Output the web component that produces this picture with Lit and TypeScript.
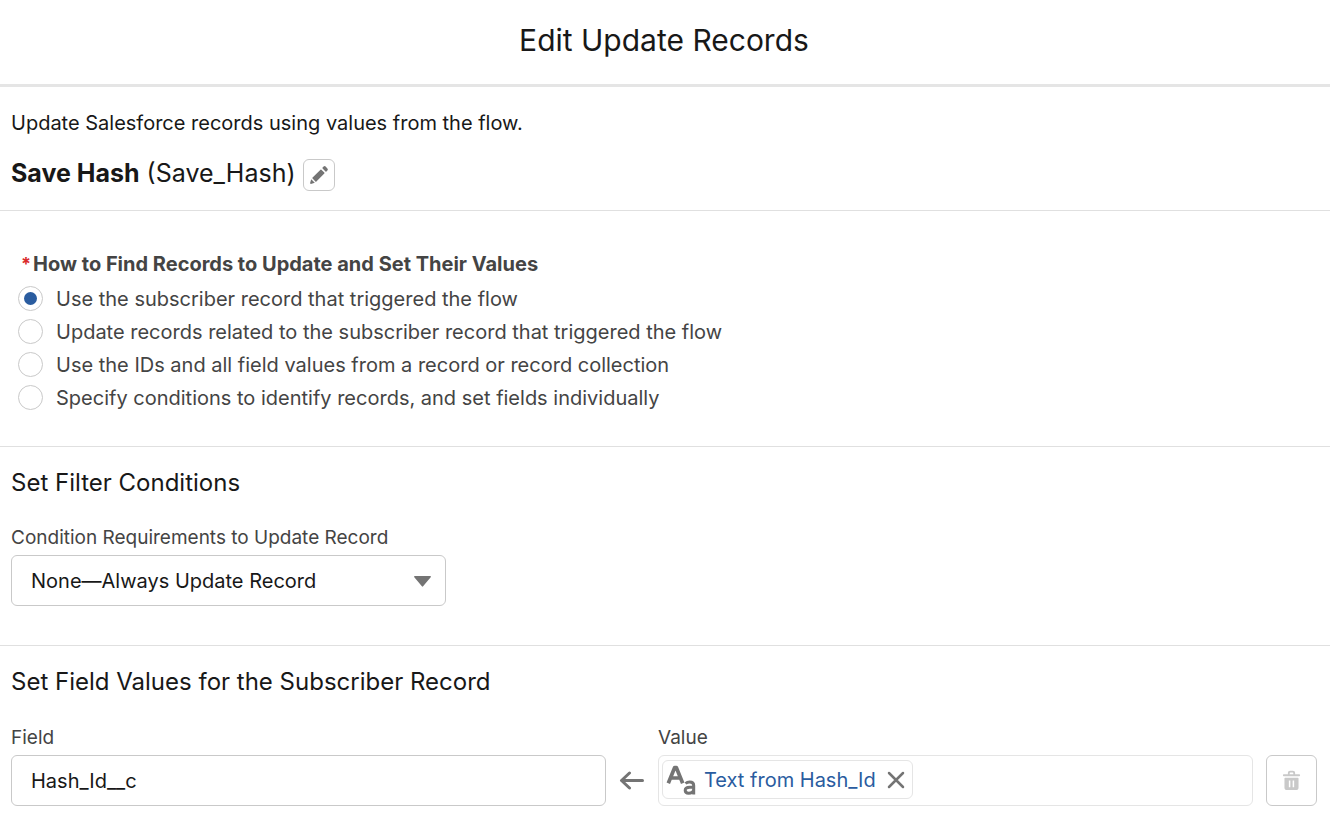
import { LitElement, html, css, svg } from "lit";
import { customElement, state } from "lit/decorators.js";

const FIND_OPTIONS = [
  { value: "trigger", label: "Use the subscriber record that triggered the flow" },
  { value: "related", label: "Update records related to the subscriber record that triggered the flow" },
  { value: "ids", label: "Use the IDs and all field values from a record or record collection" },
  { value: "conditions", label: "Specify conditions to identify records, and set fields individually" },
];

const pencil = svg`<svg class="icon" viewBox="0 0 20 20" width="20" height="20" aria-hidden="true">
  <path d="M13.6 2.6l1-1a1.4 1.4 0 0 1 2 0l1.8 1.8a1.4 1.4 0 0 1 0 2l-1 1a.6.6 0 0 1-.9 0l-2.9-2.9a.6.6 0 0 1 0-.9z"/>
  <path d="M11.5 4.7a.6.6 0 0 1 .9 0l2.9 2.9a.6.6 0 0 1 0 .9l-8.4 8.4-3.8-3.8z"/>
  <path d="M2.2 14.2l3.6 3.6-3.9 1.1c-.5.1-.9-.3-.8-.8z"/>
</svg>`;

const trash = svg`<svg class="icon" viewBox="0 0 20 22" width="19" height="21" aria-hidden="true">
  <path fill-rule="evenodd" d="M1.8 4.4h4.4V3.2C6.2 1.7 7.2.8 8.6.8h2.8c1.4 0 2.4.9 2.4 2.4v1.2h4.4c.5 0 .8.3.8.7v.7c0 .4-.3.7-.8.7H1.8c-.5 0-.8-.3-.8-.7v-.7c0-.4.3-.7.8-.7zM8.1 4.4h3.8V3.3c0-.4-.3-.7-.7-.7H8.8c-.4 0-.7.3-.7.7z"/>
  <path fill-rule="evenodd" d="M3.3 8h13.4c.4 0 .7.3.7.7v9.8c0 1.500-1.100 2.600-2.600 2.600H5.200c-1.500 0-2.600-1.100-2.600-2.600V8.700c0-.4.3-.7.7-.7zM7.200 11v7.100h1.600V11zM11.200 11v7.100h1.600V11z"/>
</svg>`;

const leftArrow = svg`<svg class="arrow" viewBox="0 0 26 20" width="26" height="20" aria-hidden="true">
  <path d="M23.5 9.500H3M10.500 2L2.500 9.500l8 7.500"/>
</svg>`;

const cross = svg`<svg class="cross" viewBox="0 0 18 18" width="18" height="18" aria-hidden="true">
  <path d="M2 2l14 14M16 2L2 16"/>
</svg>`;

const textType = svg`<svg class="type" viewBox="0 0 32 32" width="32" height="32" aria-hidden="true">
  <path d="M2.3 19.3L8.700 3.500h1.600L16.700 19.300M5 14h9"/>
  <path class="small" d="M19.500 19.500c1-.9 2.300-1.500 4.200-1.500 2.700 0 4 1.300 4 3.600V30.500M27.700 23.300h-4c-2.900 0-4.500 1-4.500 3 0 1.800 1.300 2.900 3.400 2.900 3 0 5.100-1.700 5.100-4.200"/>
</svg>`;

@customElement("app-root")
export class AppRoot extends LitElement {
  @state() private selected = "trigger";

  static styles = css`
    :host {
      display: block;
      background: #fff;
      color: #181818;
      font-family: Inter, "Liberation Sans", sans-serif;
      font-size: 20px;
      line-height: 30px;
    }
    * { box-sizing: border-box; }
    h1, h2, p, fieldset { margin: 0; padding: 0; font-weight: 400; }
    button, input, select { font: inherit; color: inherit; margin: 0; }
    header {
      padding: 20px 13px 24px 11px;
      border-bottom: 3px solid #e5e5e5;
      text-align: center;
    }
    h1 { font-size: 30px; line-height: 40px; }
    section { padding: 16px 13px 39px 11px; }
    section + section { border-top: 1px solid #e0e0e0; }
    .intro { padding: 21px 13px 19px 11px; }
    .name { display: flex; align-items: flex-start; gap: 7px; margin-top: 21px; }
    h2 { font-size: 24px; line-height: 40px; margin-bottom: 22px; }
    .name h2 { font-size: 25px; line-height: 28px; margin: 0; }
    button {
      display: flex;
      align-items: center;
      justify-content: center;
      padding: 0;
      background: #fff;
      border: 1px solid #c9c9c9;
      border-radius: 6px;
      color: #747474;
    }
    .icon { fill: currentColor; }
    .edit { width: 32px; height: 32px; }
    .find { padding: 38px 13px 32px 18px; }
    fieldset { border: 0; min-width: 0; }
    legend {
      display: flex;
      padding: 0 0 3px 3px;
      font-weight: 700;
      color: #444;
    }
    .required { color: #da2a2a; margin-right: 2px; font-size: 18px; }
    .option { display: flex; align-items: center; gap: 13px; height: 33px; color: #444; }
    .option input {
      appearance: none;
      display: grid;
      place-items: center;
      width: 25px;
      height: 25px;
      border: 1px solid #c9c9c9;
      border-radius: 50%;
    }
    .option input:checked::before {
      content: "";
      width: 13px;
      height: 13px;
      border-radius: 50%;
      background: #2a5c9f;
    }
    .caption { display: block; font-size: 19px; line-height: 26px; color: #444; margin-bottom: 4px; }
    .select { position: relative; display: flex; width: 435px; max-width: 100%; }
    .select svg { position: absolute; right: 15px; top: 21px; fill: #747474; pointer-events: none; }
    select, .text {
      appearance: none;
      width: 100%;
      height: 51px;
      padding: 0 19px;
      background: #fff;
      border: 1px solid #c9c9c9;
      border-radius: 6px;
    }
    .row { display: grid; grid-template-columns: 1fr 26px 1fr 51px; column-gap: 13px; align-items: end; }
    .values { padding-bottom: 16px; }
    .values h2 { margin-bottom: 23px; }
    .arrow, .cross, .type { fill: none; stroke: #747474; stroke-width: 3; stroke-linecap: round; stroke-linejoin: round; }
    .between { display: flex; align-items: center; height: 51px; }
    .cross { stroke-width: 2.5; }
    .type { stroke-width: 3.7; stroke-linecap: butt; }
    .small { stroke-width: 3; }
    .resource {
      display: flex;
      align-items: flex-start;
      height: 51px;
      padding: 4px 3px;
      border: 1px solid #e5e5e5;
      border-radius: 6px;
    }
    .pill {
      display: flex;
      align-items: center;
      height: 39px;
      padding: 0 6px 0 3px;
      border: 1px solid #e5e5e5;
      border-radius: 6px;
    }
    .pill a { color: #2a5c9f; text-decoration: none; margin: 0 10px 0 6px; }
    .pill button { border: 0; width: 20px; height: 20px; }
    .delete { width: 51px; height: 51px; color: #c9c9c9; }
  `;

  render() {
    return html`
      <header><h1>Edit Update Records</h1></header>
      <main>
        <section class="intro">
          <p>Update Salesforce records using values from the flow.</p>
          <div class="name">
            <h2><b>Save Hash</b> (Save_Hash)</h2>
            <button class="edit" aria-label="Edit label">${pencil}</button>
          </div>
        </section>
        <section class="find">
          <fieldset>
            <legend><span class="required">*</span>How to Find Records to Update and Set Their Values</legend>
            ${FIND_OPTIONS.map((o) => html`
              <label class="option">
                <input type="radio" name="find" .value=${o.value} ?checked=${this.selected === o.value}
                  @change=${() => (this.selected = o.value)} />
                <span>${o.label}</span>
              </label>`)}
          </fieldset>
        </section>
        <section class="conditions">
          <h2>Set Filter Conditions</h2>
          <label class="caption" for="requirement">Condition Requirements to Update Record</label>
          <div class="select">
            <select id="requirement"><option>None—Always Update Record</option></select>
            <svg viewBox="0 0 17 11" width="17" height="11" aria-hidden="true"><path d="M.8 0h15.400c.7 0 1 .8.500 1.300L9.100 10.300a.8.8 0 0 1-1.200 0L.3 1.300C-.2.8.1 0 .8 0z"/></svg>
          </div>
        </section>
        <section class="values">
          <h2>Set Field Values for the Subscriber Record</h2>
          <div class="row">
            <div>
              <label class="caption" for="field">Field</label>
              <input class="text" id="field" type="text" value="Hash_Id__c" />
            </div>
            <div class="between">${leftArrow}</div>
            <div>
              <span class="caption" id="value-label">Value</span>
              <div class="resource" role="group" aria-labelledby="value-label">
                <span class="pill">
                  ${textType}
                  <a href="#">Text from Hash_Id</a>
                  <button aria-label="Remove">${cross}</button>
                </span>
              </div>
            </div>
            <button class="delete" disabled aria-label="Delete">${trash}</button>
          </div>
        </section>
      </main>
    `;
  }
}
